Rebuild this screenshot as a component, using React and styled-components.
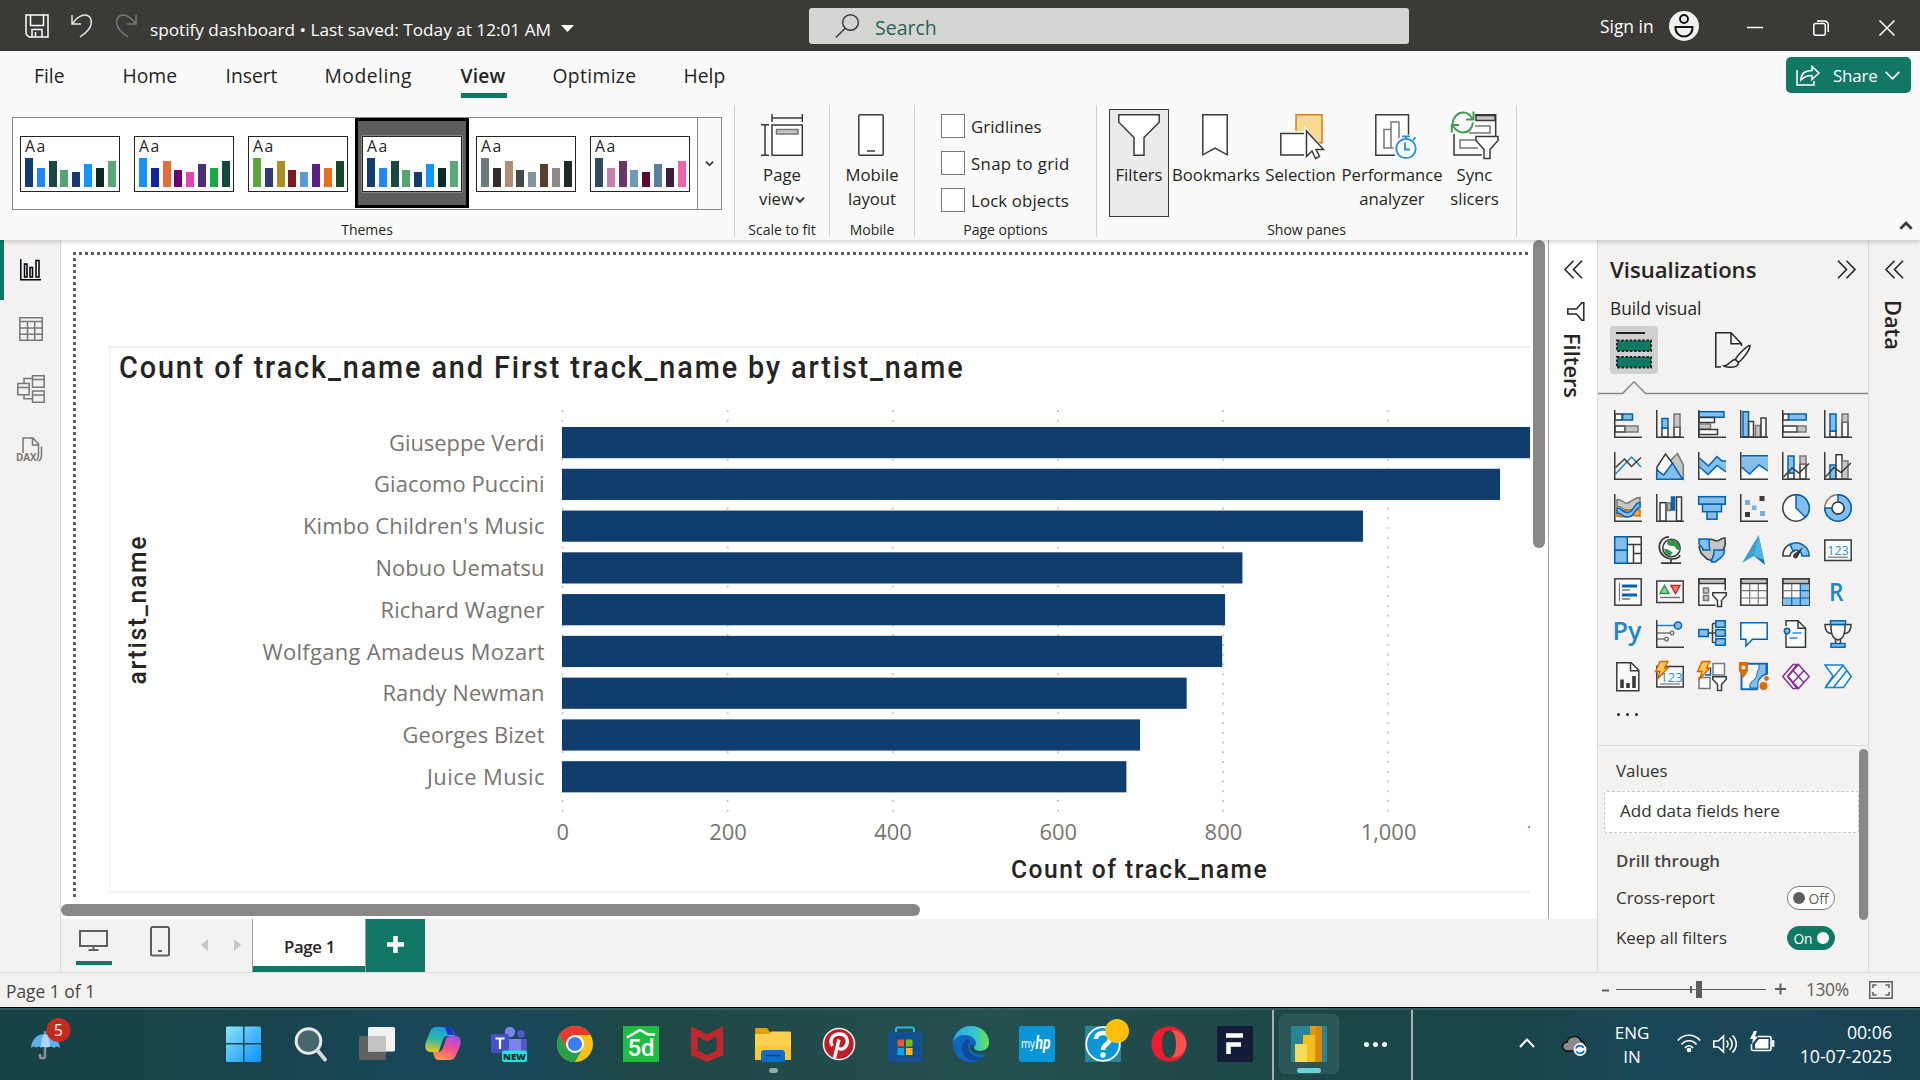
import React from "react";
import styled, { createGlobalStyle } from "styled-components";

const sans = `"Open Sans", "Noto Sans", "Liberation Sans", sans-serif`;
const din = `Roboto, "Open Sans", sans-serif`;
const green = "#117865";
const dark = "#3b3a39";
const blue = "#0063b1";
const lightBlue = "#83beec";
const gray = "#797775";
const lightGray = "#c8c6c4";
const offWhite = "#fafafa";

const Global = createGlobalStyle`
  * { box-sizing: border-box; }
  body { margin: 0; background: #f3f2f1; font-family: ${sans}; color: #252423; overflow: hidden; }
  svg { display: block; flex: none; overflow: visible; }
`;

const Window = styled.div`
  display: flex;
  flex-direction: column;
  width: 1920px;
  height: 1080px;
  overflow: hidden;
`;

/* ---------- title bar ---------- */
const TitleBar = styled.header`
  display: flex;
  align-items: center;
  height: 51px;
  background: #3b3a37;
  color: #fff;
  flex: none;
`;
const QuickAccess = styled.div`
  display: flex;
  align-items: center;
  gap: 22px;
  padding-left: 25px;
  width: 150px;
`;
const DocTitle = styled.div`
  display: flex;
  align-items: center;
  gap: 10px;
  width: 659px;
  font-size: 17.2px;
  white-space: nowrap;
  padding-top: 7px;
`;
const SearchBox = styled.div`
  display: flex;
  align-items: center;
  gap: 16px;
  width: 600px;
  height: 36px;
  margin-bottom: -1px;
  padding-left: 26px;
  border-radius: 3px;
  background: #d4d4d2;
  color: #2a6358;
  font-size: 19.5px;
  span { padding-top: 2px; }
`;
const SignIn = styled.div`
  display: flex;
  align-items: center;
  gap: 15px;
  width: 338px;
  padding-left: 191px;
  font-size: 17.4px;
  white-space: nowrap;
`;
const WindowButtons = styled.div`
  display: flex;
  align-items: center;
  gap: 50px;
  padding-top: 4px;
`;

/* ---------- ribbon ---------- */
const Ribbon = styled.div`
  height: 189px;
  flex: none;
  background: #fafafa;
  box-shadow: 0 2px 5px rgba(0, 0, 0, 0.18);
  z-index: 2;
`;
const TabRow = styled.nav`
  display: flex;
  height: 54px;
  padding-left: 34px;
`;
const Tab = styled.div`
  width: ${(p) => p.$w}px;
  height: 47px;
  margin-right: ${(p) => p.$gap || 48}px;
  padding-top: 11px;
  font-size: 19.3px;
  line-height: 28px;
  white-space: nowrap;
  font-weight: ${(p) => (p.$active ? 600 : 400)};
  border-bottom: 5px solid ${(p) => (p.$active ? green : "transparent")};
  letter-spacing: ${(p) => p.$ls || 0}px;
`;
const ShareButton = styled.div`
  display: flex;
  align-items: center;
  width: 125px;
  height: 36px;
  margin: 6px 9px 0 auto;
  padding-left: 10px;
  border-radius: 5px;
  background: ${green};
  color: #fff;
  font-size: 17px;
  span { width: 57px; padding-left: 13px; margin-right: 8px; letter-spacing: -0.2px; }
`;
const GroupRow = styled.div`
  display: flex;
  height: 132px;
`;
const Group = styled.section`
  display: flex;
  flex-direction: column;
  justify-content: space-between;
  width: ${(p) => p.$w}px;
  border-right: 1px solid #d2d0ce;
`;
const GroupBody = styled.div`
  display: flex;
  height: 112px;
  padding-top: 4px;
  padding-left: ${(p) => p.$pl || 0}px;
  justify-content: ${(p) => (p.$center ? "center" : "flex-start")};
`;
const GroupLabel = styled.div`
  height: 17px;
  font-size: 14px;
  line-height: 19px;
  text-align: center;
  white-space: nowrap;
`;
const Gallery = styled.div`
  display: flex;
  width: 710px;
  height: 93px;
  margin: 8px 0 0 12px;
  border: 1px solid #8a8886;
  background: #fff;
`;
const ThemeCell = styled.div`
  display: flex;
  align-items: center;
  justify-content: center;
  width: 114px;
  height: ${(p) => (p.$active ? 90 : 91)}px;
  padding-top: ${(p) => (p.$active ? 1 : 0)}px;
  border: ${(p) => (p.$active ? "3px solid #000" : "0")};
  background: ${(p) => (p.$active ? "#5c5c5c" : "#fff")};
`;
const ThemeThumb = styled.div`
  display: flex;
  flex-direction: column;
  justify-content: space-between;
  width: 100px;
  height: 56px;
  padding: 2px 3px 4px 4px;
  border: 1px solid #252423;
  background: #fff;
  outline: ${(p) => (p.$active ? "1px solid #888" : "0")};
  flex: none;
`;
const ThumbText = styled.div`
  height: 18px;
  font-size: 15.8px;
  line-height: 15px;
  letter-spacing: 1.5px;
`;
const ThumbBars = styled.div`
  display: flex;
  align-items: flex-end;
  gap: 3.8px;
  height: 29px;
`;
const ThumbBar = styled.i`
  width: 8px;
  height: ${(p) => p.$h}px;
  background: ${(p) => p.$c};
`;
const GalleryMore = styled.div`
  display: flex;
  align-items: center;
  justify-content: center;
  width: 24px;
  border-left: 1px solid #8a8886;
  background: #fafafa;
`;
const Command = styled.div`
  display: flex;
  flex-direction: column;
  align-items: center;
  width: ${(p) => p.$w}px;
  height: 108px;
  border: 1px solid ${(p) => (p.$active ? "#3b3a39" : "transparent")};
  background: ${(p) => (p.$active ? "#ebebeb" : "transparent")};
`;
const CommandIcon = styled.div`
  display: flex;
  justify-content: center;
  height: 53px;
  padding-top: 4px;
  padding-left: ${(p) => p.$pl || 0}px;
  padding-right: ${(p) => p.$pr || 0}px;
`;
const CommandText = styled.div`
  font-size: 16.7px;
  line-height: 24px;
  text-align: center;
  white-space: pre;
  svg { display: inline-block; margin-left: 1px; vertical-align: 2px; }
`;
const CheckList = styled.div`
  display: flex;
  flex-direction: column;
  gap: 13px;
  padding: 5px 0 0 26px;
`;
const CheckRow = styled.label`
  display: flex;
  align-items: center;
  gap: 6px;
  height: 24px;
  font-size: 16.8px;
  letter-spacing: ${(p) => p.$ls}px;
  white-space: nowrap;
`;
const CheckBox = styled.i`
  width: 24px;
  height: 24px;
  border: 1px solid #797775;
  background: #fff;
`;
const Collapse = styled.div`
  display: flex;
  align-items: flex-end;
  margin-left: auto;
  padding: 0 7px 7px 0;
`;

/* ---------- work area ---------- */
const Work = styled.main`
  display: flex;
  height: 732px;
  flex: none;
`;
const Nav = styled.aside`
  width: 61px;
  border-right: 1px solid #dcdbd9;
  background: #f3f2f1;
`;
const NavItem = styled.div`
  display: flex;
  align-items: center;
  justify-content: center;
  height: ${(p) => p.$h || 60}px;
  padding-left: ${(p) => (p.$active ? 0 : 2)}px;
  padding-right: ${(p) => (p.$active ? 3 : 0)}px;
  border-left: ${(p) => (p.$active ? `4px solid ${green}` : "0")};
`;
const CenterColumn = styled.div`
  width: 1536px;
  display: flex;
  flex-direction: column;
`;
const CanvasRow = styled.div`
  display: flex;
  height: 679px;
  background: #fff;
`;
const CanvasArea = styled.div`
  display: grid;
  grid-template-columns: 1472px 12px 3px;
  grid-template-rows: 664px 12px 3px;
  width: 1487px;
`;
const Page = styled.div`
  width: 1457px;
  height: 646px;
  margin: 12px 0 0 12px;
  padding: 94px 0 0 36px;
  overflow: hidden;
  background:
    repeating-linear-gradient(90deg, #605e5c 0 3px, #fff 3px 6px) 0 0 / 100% 3px no-repeat,
    repeating-linear-gradient(180deg, #605e5c 0 3px, #fff 3px 6px) 0 0 / 3px 100% no-repeat,
    #fff;
`;
const Visual = styled.section`
  width: 1800px;
  height: 547px;
  border: solid #f1f1f1;
  border-width: 2px 1px;
`;
const VisualTitle = styled.h2`
  height: 52px;
  margin: 0;
  padding: 1px 0 0 9px;
  font: 500 31px/38px ${din};
  letter-spacing: 2.02px;
  white-space: nowrap;
  span { display: inline-block; transform: scaleX(0.93); transform-origin: 0 50%; }
`;
const ScrollThumb = styled.div`
  width: ${(p) => p.$w}px;
  height: ${(p) => p.$h}px;
  border-radius: 6px;
  background: #8a8886;
`;
const FiltersPane = styled.aside`
  display: flex;
  flex-direction: column;
  align-items: center;
  width: 49px;
  padding-top: 20px;
  border-left: 1px solid #a6a5a3;
  background: #fff;
`;
const FilterGlyph = styled.div`
  padding: 23px 0 0 6px;
`;
const VerticalLabel = styled.div`
  writing-mode: vertical-rl;
  font-size: ${(p) => p.$size}px;
  font-weight: 600;
  line-height: 28px;
  margin-top: ${(p) => p.$mt}px;
  margin-right: ${(p) => p.$mr || 0}px;
`;
const PageBar = styled.div`
  display: flex;
  height: 53px;
  background: #f3f2f1;
`;
const ViewModes = styled.div`
  display: flex;
  width: 191px;
  padding: 7px 0 0 15px;
`;
const ViewMode = styled.div`
  display: flex;
  flex-direction: column;
  align-items: center;
  width: 36px;
  height: 39px;
  margin-right: ${(p) => p.$gap || 0}px;
  padding-top: ${(p) => p.$pt || 0}px;
  padding-right: 2px;
  border-bottom: 4px solid ${(p) => (p.$active ? green : "transparent")};
`;
const PageArrows = styled.div`
  display: flex;
  gap: 26px;
  padding: 13px 0 0 22px;
`;
const PageTab = styled.div`
  width: 114px;
  padding: 12px 0 0 1px;
  border: solid #a19f9d;
  border-width: 0 1px;
  background: linear-gradient(${green}, ${green}) 0 100% / 100% 6px no-repeat, #fff;
  font-size: 16.8px;
  font-weight: 600;
  line-height: 32px;
  text-align: center;
  letter-spacing: -0.3px;
`;
const AddPage = styled.div`
  display: flex;
  align-items: center;
  justify-content: center;
  width: 59px;
  padding-bottom: 3px;
  background: ${green};
`;

/* ---------- visualizations pane ---------- */
const VizPane = styled.aside`
  width: 272px;
  border: solid #dcdbd9;
  border-width: 0 1px;
  background: #f3f2f1;
`;
const PaneHeader = styled.div`
  display: flex;
  align-items: center;
  justify-content: space-between;
  height: 58px;
  padding: 0 12px 0 12px;
  font-size: 22.1px;
  font-weight: 600;
`;
const BuildLabel = styled.div`
  height: 20px;
  padding: 1px 0 0 12px;
  font-size: 17.3px;
  line-height: 20px;
  font-weight: 500;
`;
const ModeRow = styled.div`
  display: flex;
  gap: 51px;
  height: 48px;
  margin-top: 8px;
  padding-left: 12px;
`;
const ModeButton = styled.div`
  display: flex;
  align-items: center;
  justify-content: center;
  width: 48px;
  height: 48px;
  border-radius: 4px;
  background: ${(p) => (p.$active ? "#d2d0ce" : "transparent")};
`;
const DividerWrap = styled.div`
  height: 36px;
  padding-top: 7px;
`;
const VizGrid = styled.div`
  display: grid;
  grid-template-columns: repeat(6, 28px);
  gap: 14px;
  padding-left: 16px;
`;
const More = styled.div`
  display: flex;
  gap: 6px;
  height: 55px;
  padding: 23px 0 0 19px;
  i { width: 3px; height: 3px; border-radius: 2px; background: #252423; }
`;
const FieldsArea = styled.div`
  display: flex;
  justify-content: space-between;
  height: 226px;
  padding-top: 3px;
  border-top: 1px solid #dcdbd9;
`;
const Fields = styled.div`
  width: 261px;
  padding-left: 6px;
`;
const FieldLabel = styled.div`
  height: ${(p) => p.$h}px;
  padding: ${(p) => p.$pt}px 0 0 12px;
  font-size: 16.9px;
  line-height: 24px;
  font-weight: ${(p) => (p.$bold ? 600 : 400)};
  color: ${(p) => (p.$bold ? "#484644" : "#323130")};
`;
const DropWell = styled.div`
  width: 255px;
  height: 42px;
  padding-left: 15px;
  border: 1px dashed #c8c6c4;
  border-radius: 3px;
  background: #fff;
  color: #323130;
  font-size: 17.1px;
  line-height: 38px;
`;
const ToggleRow = styled.div`
  display: flex;
  align-items: center;
  justify-content: space-between;
  height: 40px;
  padding: 0 24px 0 12px;
  font-size: 16.9px;
  color: #323130;
  span { padding-bottom: 2px; }
`;
const Toggle = styled.div`
  display: flex;
  align-items: center;
  justify-content: center;
  flex-direction: ${(p) => (p.$on ? "row-reverse" : "row")};
  gap: ${(p) => (p.$on ? 4 : 3)}px;
  width: 48px;
  height: 24px;
  border: 1px solid ${(p) => (p.$on ? green : gray)};
  border-radius: 12px;
  background: ${(p) => (p.$on ? green : "#fff")};
  color: ${(p) => (p.$on ? "#fff" : "#605e5c")};
  font-size: 13.8px;
  i { width: 12px; height: 12px; border-radius: 6px; background: ${(p) => (p.$on ? "#fff" : "#605e5c")}; }
`;
const DataPane = styled.aside`
  display: flex;
  flex-direction: column;
  align-items: center;
  width: 51px;
  padding-top: 20px;
  background: #f3f2f1;
`;

/* ---------- status bar ---------- */
const StatusBar = styled.footer`
  display: flex;
  align-items: center;
  justify-content: space-between;
  height: 36px;
  padding: 0 27px 0 6px;
  border-top: 1px solid #dcdbd9;
  border-bottom: 1px solid #000;
  background: #f3f2f1;
  color: #484644;
  font-size: 17.4px;
  flex: none;
`;
const PageCount = styled.span`
  padding-top: 1px;
`;
const Zoom = styled.div`
  display: flex;
  align-items: center;
  color: #605e5c;
  span { width: 62px; margin-left: -1px; margin-right: 1px; padding-bottom: 2px; letter-spacing: -0.4px; }
`;

/* ---------- taskbar ---------- */
const Taskbar = styled.div`
  display: flex;
  height: 72px;
  flex: none;
  border-top: 2px solid #335c60;
  background: linear-gradient(90deg, #174346 0, #17434a 12%, #194757 21%, #1a4858 28%, #1d4845 33%, #214a49 40%, #24504f 52%, #204a4a 62%, #1a4746 70%, #184549 79%, #1a4757 86%, #194556 94%, #174250 100%);
  color: #fff;
`;
const Weather = styled.div`
  width: 225px;
  padding: 6px 0 0 30px;
`;
const AppSlot = styled.div`
  display: flex;
  flex-direction: column;
  width: ${(p) => (p.$first ? 67 : 66)}px;
  padding: 16px 0 0 1px;
`;
const Dot = styled.i`
  width: 9px;
  height: 5px;
  margin: 6px 0 0 14px;
  border-radius: 3px;
  background: #93a8a8;
`;
const Divider = styled.i`
  width: 2px;
  height: 70px;
  margin-left: ${(p) => p.$ml}px;
  background: #a3b3b3;
`;
const ActiveApp = styled.div`
  display: flex;
  flex-direction: column;
  align-items: center;
  width: 60px;
  height: 60px;
  margin: 4px 0 0 5px;
  padding-top: 11px;
  border: 1px solid #355d5d;
  border-radius: 6px;
  background: #2b5655;
  i { width: 24px; height: 5px; margin-top: 6px; border-radius: 3px; background: #6fd0dc; }
`;
const TrayDots = styled.div`
  display: flex;
  gap: 4px;
  padding: 32px 0 0 25px;
  i { width: 5px; height: 5px; border-radius: 3px; background: #fff; }
`;
const Tray = styled.div`
  display: flex;
  flex: 1;
  padding-left: 106px;
`;
const TrayItem = styled.div`
  width: ${(p) => p.$w}px;
  padding-top: ${(p) => p.$pt}px;
`;
const TrayText = styled.div`
  width: ${(p) => p.$w}px;
  margin-right: ${(p) => p.$mr || 0}px;
  padding-top: 11px;
  font-size: ${(p) => p.$size}px;
  line-height: 23.5px;
  text-align: ${(p) => p.$align};
  white-space: nowrap;
`;

/* ---------- drawing helpers ---------- */
const Icon = ({ w, h, vb, children, stroke = dark, sw = 1.5 }) => (
  <svg width={w} height={h} viewBox={vb || `0 0 ${w} ${h}`} fill="none" stroke={stroke} strokeWidth={sw}>
    {children}
  </svg>
);
const Chevrons = ({ flip }) => (
  <Icon w={19} h={19} stroke="#252423" sw={1.6}>
    <path d={flip ? "M1 .8l8.5 8.7L1 18.2M9.5.8l8.5 8.7-8.5 8.7" : "M9.5.8L1 9.5l8.5 8.7M18 .8L9.500 9.500l8.500 8.700"} />
  </Icon>
);
const SmallCaret = ({ up, w = 9 }) => (
  <Icon w={w} h={w * 0.62} vb="0 0 10 6.2" sw={2}>
    <path d={up ? "M1 5.5l4-4 4 4" : "M1 .8l4 4 4-4"} />
  </Icon>
);

/* ---------- theme gallery ---------- */
const barHeights = [29, 18.5, 25.5, 17, 14.5, 22.5, 18.5, 25.5];
const themes = [
  ["#143c6e", "#2188ff", "#1c4640", "#57a472", "#143c6e", "#1296ff", "#0b2a26", "#5aa878"],
  ["#1890ff", "#12239e", "#e66c37", "#6b007b", "#e645ab", "#4b2e78", "#1aab40", "#15463f"],
  ["#5ba53c", "#2d3a74", "#ab8f22", "#7a1a22", "#5b9bd5", "#5c1f85", "#e8701c", "#18472a"],
  ["#143c6e", "#2188ff", "#1c4640", "#57a472", "#143c6e", "#1296ff", "#0b2a26", "#5aa878"],
  ["#6b7a7c", "#342a28", "#b08d74", "#404a4a", "#83959a", "#5e3a30", "#8d8b85", "#1f2928"],
  ["#34495e", "#c77fae", "#6b3569", "#6d9abb", "#5f0631", "#5b809c", "#3c1d3c", "#ee62a6"],
];

/* ---------- bar chart ---------- */
const artists = [
  ["Giuseppe Verdi", 1240, 155.5],
  ["Giacomo Puccini", 1136, 170.5],
  ["Kimbo Children's Music", 970, 241.5],
  ["Nobuo Uematsu", 824, 169],
  ["Richard Wagner", 803, 164],
  ["Wolfgang Amadeus Mozart", 799.5, 282],
  ["Randy Newman", 756.5, 162],
  ["Georges Bizet", 700, 142],
  ["Juice Music", 683.5, 117.5],
];
const PlotLabel = styled.text`
  font: 400 21.9px ${sans};
  fill: #777472;
`;
const AxisTitle = styled.text`
  font: 500 26.5px ${din};
  fill: #252423;
`;
const x0 = 562.5;
const step = 165.15;
const Chart = () => (
  <svg width="1690" height="491" viewBox="110 400 1690 491">
    {[0, 1, 2, 3, 4, 5].map((i) => (
      <line key={i} x1={x0 + i * step} x2={x0 + i * step} y1="410" y2="812" stroke="#c8c6c4" strokeWidth="1.8" strokeDasharray="2 7.75" />
    ))}
    {artists.map(([name, v, len], i) => (
      <g key={name}>
        <rect x="562" y={427 + i * 41.77} width={(v / 200) * step} height="31.2" fill="#113d6e" />
        <PlotLabel x={544.5 - len} y={450.7 + i * 41.77} textLength={len}>{name}</PlotLabel>
      </g>
    ))}
    {["0", "200", "400", "600", "800", "1,000", "1,200"].map((t, i) => (
      <PlotLabel key={t} x={x0 + 0.3 + i * step} y="840" textAnchor="middle">{t}</PlotLabel>
    ))}
    <AxisTitle textLength="275" transform="translate(1011 877.5) scale(.93 1)">Count of track_name</AxisTitle>
    <AxisTitle textLength="159" transform="translate(145.500 684.500) rotate(-90) scale(.93 1)">artist_name</AxisTitle>
  </svg>
);

/* ---------- visual type icons ---------- */
const B = (p) => <rect fill={lightBlue} stroke={blue} {...p} />;
const G = (p) => <rect fill={lightGray} stroke={gray} {...p} />;
const W = (p) => <rect fill={offWhite} stroke={dark} {...p} />;
const Axis = () => <path d="M.75 0v27.25H28" />;
const Bolt = () => <path d="M4-.5h8L8.5 6H12L1.5 17 4 9.500H-.5z" fill="#f9c74f" stroke="#d06000" strokeWidth="1.3" />;
const Funnel = ({ x = 14, y = 14 }) => (
  <path transform={`translate(${x} ${y})`} d="M.7.7h13.600v2.600L9.500 8.500v6h-4v-6L.7 3.300z" fill={offWhite} />
);
const vizIcons = [
  <><W x="1" y="4" width="7" height="6" /><B x="8.700" y="4" width="9.800" height="6" /><W x="1" y="16" width="10" height="6" /><G x="11.500" y="16" width="12.500" height="6" /><Axis /></>,
  <><W x="6" y="18" width="6" height="9" /><B x="6" y="8.500" width="6" height="9.500" /><W x="18" y="17" width="6" height="10" /><G x="18" y="4" width="6" height="13" /><Axis /></>,
  <><B x="1" y="1.700" width="25" height="5.500" /><W x="1" y="7.500" width="15.500" height="5" /><G x="1" y="14" width="11.500" height="5" /><W x="1" y="19.500" width="18.500" height="5" /><Axis /></>,
  <><B x="3" y="1.700" width="5.500" height="25" /><W x="8.700" y="11.500" width="4.800" height="15.500" /><G x="15.500" y="15.500" width="4.800" height="11.500" /><W x="21" y="8" width="5" height="19" /><Axis /></>,
  <><W x="1" y="4" width="5.500" height="6" /><B x="6.700" y="4" width="17.500" height="6" /><W x="1" y="16" width="14" height="6" /><G x="15.500" y="16" width="8.500" height="6" /><Axis /></>,
  <><W x="6" y="21" width="6" height="6" /><B x="6" y="4" width="6" height="17" /><W x="18" y="12" width="6" height="15" /><G x="18" y="4" width="6" height="8" /><Axis /></>,
  <><path d="M1.500 22L10 13l7.500-8L27 15" stroke="#2287c7" /><path d="M1.500 15.500l9-8.500 7 7.500L27 5.500" /><Axis /></>,
  <><path d="M13 10L21.500 1.500 27.300 13v14L14 14z" fill={lightGray} stroke={gray} /><path d="M1 18V15L9.500 2l7.500 10-9 12z" fill={offWhite} /><path d="M.7 18l7 5L16.500 11l10 16.200H.7z" fill={lightBlue} stroke={blue} /></>,
  <><path d="M1 15l9 7.500 9-9 8.500 7V27H1z" fill={offWhite} stroke="none" /><path d="M1.500 6l9 8 8.500-9.500 5 4.500h4v11L19 13.500l-9 9L1.500 15z" fill={lightBlue} stroke="none" /><path d="M1.500 6l9 8 8.500-9.500 5 4.500h4M28 20l-9-6.500-9 9L1.500 15" stroke={blue} /><Axis /></>,
  <><path d="M1.500 3.700H28V19l-9-6-9.500 9-8-7z" fill={lightBlue} stroke="none" /><path d="M1.500 15l8 7 9.500-9 9 7v7H1.500z" fill={offWhite} stroke="none" /><path d="M1.500 3.700H28M28 19l-9-6-9.500 9-8-7" stroke={blue} /><Axis /></>,
  <><W x="6" y="21" width="6" height="6" /><B x="6" y="4" width="6" height="17" /><W x="18" y="12" width="6" height="15" /><G x="18" y="4" width="6" height="8" /><path d="M1.500 25L10 16l7 5 10-9.500" /><Axis /></>,
  <><B x="6" y="13" width="6" height="14" /><W x="12" y="2.700" width="6" height="24.500" /><G x="18" y="9" width="6" height="18" /><path d="M1.500 25L10 15.500l7 5 10-9.500" /><Axis /></>,
  <><path d="M3 5.500c8 0 6 6 12 3s6-5 11-5v9c-5 0-5 4-11 4s-6-4-12-4z" fill={lightGray} stroke={gray} /><path d="M3 16c5 1 6 1 12 0s6-1 11 0v6c-6-1-8-1-11 0s-6 1-12 0z" fill="#f7a83c" stroke="#e06c00" /><path d="M3 14c6 0 5 5 11 4.500S20 8.500 26 8.500v5c-5 0-5 9-12 9.500S9 19 3 19z" fill={lightBlue} stroke={blue} /><Axis /></>,
  <><W x="4" y="8.700" width="6" height="18.500" /><G x="11.500" y="9" width="3" height="7.500" /><rect x="15.500" y="3" width="3" height="13" fill="#1068b5" stroke={blue} /><W x="20.500" y="3" width="5" height="24" /><Axis /></>,
  <><B x=".7" y="2.700" width="26.600" height="7.500" /><B x="4.500" y="10.200" width="19" height="7.500" /><B x="9" y="17.700" width="10" height="7.500" /></>,
  <><g stroke="none"><path d="M19.500 2h5v5h-5zM5 18h5v5H5z" fill={dark} /><path d="M5 6h5v5H5zM12 11.500h4.500V16H12zM20 17h5v5h-5z" fill="#6cb1e8" /></g><Axis /></>,
  <><circle cx="14" cy="14" r="13.200" fill={offWhite} /><path d="M14 .8A13.200 13.200 0 0 1 23.300 23.300L14 14z" fill={lightBlue} stroke={blue} /></>,
  <><circle cx="14" cy="14" r="13.200" fill={offWhite} stroke={gray} /><path d="M14 .8A13.200 13.200 0 1 1 .8 14H8a6 6 0 1 0 6-6z" fill={lightBlue} stroke={blue} /><circle cx="14" cy="14" r="6" fill={offWhite} /></>,
  <><rect x=".8" y=".8" width="26.400" height="26.400" fill={offWhite} /><B x=".8" y=".8" width="12.500" height="13.500" /><B x=".8" y="14.300" width="12.500" height="12.900" /><path d="M13.300 8.500H27M19.500 8.500V27M19.500 17.500H27" /></>,
  <><circle cx="15.500" cy="12" r="8.700" fill="#fff" /><path d="M15.500 3.500c4 0 3 3 6 2.500 2 3 3 6 1 8-3 0-3-4-5-4s-5 0-6-2 1-4 4-4.500zM8 13c3-1 6 2 8 3s-2 4-3 4-4-3-5-7z" fill="#2f9648" stroke="none" /><path d="M13 .8C6 1 2.500 7 3.500 13s7 10 12 10 8-2 8.500-4M15 23v4M5 27.200h20" strokeWidth="1.700" /></>,
  <><path d="M11.500 3.500c4-1 6 3 9 1s4-3 6.500-2.500c1 6-1 12-4 15s-6 3-8 8l-6-2-6-6-2-6z" fill={lightGray} stroke={dark} /><path d="M1 3h9.500c2 2-.5 7 1.500 11H5c0-3-3-4-4-6z" fill={lightBlue} stroke={blue} /><path d="M16 14h10.500c0 7-5 8-9 12h-4c-1-3 3-4 2.500-12z" fill={lightBlue} stroke={blue} /></>,
  <g stroke="none"><path d="M18.500-1L2 27l12-7z" fill="#3c9fd0" /><path d="M18.500-1L25 29 14 20z" fill="#1272c4" /><path d="M18.500-1L14 20l10 4z" fill="#4fb4e0" /></g>,
  <><path d="M.8 20A13.200 13.200 0 0 1 8 8.200L12 15a6 6 0 0 0-4 5z" fill={offWhite} /><path d="M8 8.500A13 13 0 0 1 27.200 20H20a6 6 0 0 0-9-5z" fill={lightBlue} stroke={blue} /><path d="M21 11l-5 9.500a2.500 2.500 0 1 1-4-2.500z" fill={dark} stroke="none" /></>,
  <><rect x=".8" y="4" width="26.400" height="20.500" fill={offWhite} /><path d="M4 21.200h20" stroke={gray} strokeWidth="1.200" /><text x="14" y="18.500" fontSize="12.500" fill="#2b8fd0" stroke="none" textAnchor="middle" fontFamily="Open Sans">123</text></>,
  <><rect x=".8" y=".8" width="26.400" height="26.400" fill={offWhite} /><path d="M5.500 4.500v19" stroke={gray} strokeWidth="1.200" /><path d="M8 8h15M8 17h15" stroke={blue} strokeWidth="3" /><path d="M8 12h8M8 21h8" stroke={gray} /></>,
  <><rect x=".8" y="3" width="26.400" height="21.500" fill={offWhite} /><path d="M4 15.500l4.500-8 4.500 8z" fill="#8fd09a" stroke="#2f9648" /><path d="M15 7.500h9l-4.500 8z" fill="#f08080" stroke="#c62828" /><path d="M4 19.500h20" stroke={gray} /></>,
  <><rect x=".8" y=".8" width="26.400" height="26.400" fill={offWhite} /><path d="M1 1h26v4.500H1z" fill={lightGray} /><G x="5.500" y="10" width="5" height="5" /><G x="5.500" y="17.500" width="5" height="5" /><path d="M13.500 12.500h16v18h-11z" fill="#f3f2f1" stroke="none" /><Funnel x={14} y={14} /></>,
  <><rect x=".8" y=".8" width="26.400" height="26.400" fill={offWhite} /><path d="M1 1h26v4.500H1z" fill={lightGray} /><path d="M9.700 6v21M18.300 6v21M1 12.700h26M1 20h26" stroke={gray} strokeWidth="1.200" /></>,
  <><rect x=".8" y=".8" width="26.400" height="26.400" fill={offWhite} /><path d="M18.300 6H27v21H1v-7h17.300z" fill={lightBlue} stroke="none" /><path d="M1 1h26v4.500H1z" fill={lightGray} /><path d="M9.700 6v14M1 12.700h17" stroke={gray} strokeWidth="1.200" /><path d="M18.300 6v21M9.700 20v7M1 20h26M18 12.700h9" stroke={blue} strokeWidth="1.200" /></>,
  <text x="5" y="23" fontSize="25" fontWeight="600" fill="#2287c7" stroke="none" fontFamily="Open Sans" textLength="14.500" lengthAdjust="spacingAndGlyphs">R</text>,
  <text x="-1.500" y="20" fontSize="25" fontWeight="600" fill="#2287c7" stroke="none" fontFamily="Open Sans" textLength="29" lengthAdjust="spacingAndGlyphs">Py</text>,
  <><path d="M1 5.500h17" stroke="#2287c7" /><circle cx="22" cy="5.500" r="3.600" fill={lightBlue} stroke={blue} /><path d="M1 13h13M1 19h8" stroke={gray} /><circle cx="16" cy="13" r="1.800" stroke={gray} /><circle cx="10.500" cy="19" r="1.800" stroke={gray} /><Axis /></>,
  <><path d="M10 13h8M14.500 3.500v19M14.500 3.500H18M14.500 22.500H18" /><B x=".8" y="9.500" width="9.500" height="7" /><B x="17.700" y=".8" width="9.500" height="6.500" /><B x="17.700" y="9.700" width="9.500" height="6.500" /><B x="17.700" y="18.700" width="9.500" height="6.500" /></>,
  <path d="M.8 2.700h26.400v16.500H12.500L6 26v-6.800H.8z" fill={offWhite} stroke={blue} />,
  <><path d="M4 6V.8h12l7.500 7.500v18.900H4V14" fill={offWhite} /><path d="M16 .8v7.500h7.500" /><circle cx="5" cy="11" r="2.700" fill={lightBlue} stroke={blue} /><path d="M10.500 13h9M7.500 18h8" stroke="#2b8fd0" /></>,
  <><path d="M7 4.500c0 9 1 14 7 15.500 6-1.500 7-6.500 7-15.500z" fill={offWhite} /><path d="M7 4.500H1c0 6 2 9 7 9M21 4.500h6c0 6-2 9-7 9M11.500 19v4.500M16.500 19v4.500" /><B x="6.500" y=".8" width="15" height="3.700" /><B x="7" y="23.500" width="14" height="3.700" /></>,
  <><path d="M2.800.8h14.500l7.500 7.500v20.500h-22z" fill={offWhite} /><path d="M16.500.8v8h8" /><path d="M8 26v-8.500M14 26v-5M20 26V14" strokeWidth="3.600" /></>,
  <><rect x=".8" y="4.500" width="26.400" height="20.500" fill={offWhite} /><path d="M4 22h20" stroke={gray} strokeWidth="1.200" /><text x="15.500" y="19.500" fontSize="13" fill="#2b8fd0" stroke="none" textAnchor="middle" fontFamily="Open Sans">123</text><Bolt /></>,
  <><G x="15" y="1.500" width="11.500" height="11.500" fill={offWhite} /><G x="1" y="15.500" width="11" height="11" fill={offWhite} /><path d="M7 13h5.500V6" stroke={blue} /><path d="M13.500 14.500h16v15h-11z" fill="#f3f2f1" stroke="none" /><Bolt /><Funnel x={14} y={14} /></>,
  <><path d="M1.500 1.700h25.500v10c-5 1-8 4-10 9s2 4 0 6.500H1.500z" fill={offWhite} stroke="#1068b5" strokeWidth="2" /><path d="M19 2h7v10c-6 2-9 5-8 14h-8c-1-6 2-6 5-9s1-8 4-10z" fill={lightBlue} stroke="#1068b5" strokeWidth="1" /><path d="M-1 0h9v9l-4.500 7L-1 9z" fill="#e06c00" stroke="none" /><circle cx="3.500" cy="5.500" r="2" fill="#fff" stroke="none" /><g fill="#e06c00" stroke="none"><circle cx="23.500" cy="24" r="4" /><circle cx="26.500" cy="16.500" r="2.400" /></g></>,
  <g stroke="#8a2d9c" fill={offWhite}><path d="M15 2.500h-4L.8 14.500l10.200 12h4L5.800 14.500z" /><path d="M16.500 2.500l10.700 12-10.700 12-10.700-12z" /><path d="M11 8.500l11 12M22 8.500l-11 12" fill="none" /><path d="M11 8.500L5.800 14.500l5.200 6" fill="none" /></g>,
  <g stroke="#1080d8" fill={offWhite}><path d="M1 3h18l8.200 11.500L19.500 25.500H1.500L9 14z" /><path d="M1.500 25L19 3.500M9.500 25.500l13.500-17" fill="none" /></g>,
];

/* ---------- taskbar app icons ---------- */
const A = ({ children }) => <svg width="36" height="36" viewBox="0 0 36 36">{children}</svg>;
const apps = [
  <A><defs><linearGradient id="win" x2="1" y2="1"><stop stopColor="#8be4ff" /><stop offset="1" stopColor="#0a90fa" /></linearGradient></defs><path fill="url(#win)" d="M1 .5h16v16.500H0V1.500zM18.500.5H34l1 1V17H18.500zM0 18.500h17V36H1l-1-1zM18.500 18.500H35V35l-1 1H18.500z" /></A>,
  <A><circle cx="15.500" cy="15" r="12.300" fill="#47676f" stroke="#e8eaec" strokeWidth="3" /><path d="M24.500 24.500l7.500 9" stroke="#d7d9dc" strokeWidth="4" strokeLinecap="round" /></A>,
  <A><rect x="0" y="10" width="27" height="24" rx="1.500" fill="#616161" /><rect x="9" y="1" width="27" height="24.500" rx="1.500" fill="#f1f1f1" /><path d="M9 10h18v15.500H9z" fill="#c3c3c3" /></A>,
  <A><defs><linearGradient id="cpa" x1=".5" x2=".3" y2="1"><stop stopColor="#189de0" /><stop offset=".5" stopColor="#35b8a8" /><stop offset="1" stopColor="#e8cb1c" /></linearGradient><linearGradient id="cpb" x1=".8" x2=".3" y2="1"><stop stopColor="#a04df0" /><stop offset=".5" stopColor="#f0508f" /><stop offset="1" stopColor="#ff9a4a" /></linearGradient></defs><path d="M12 1h12c3 0 4 3 5 6l1 3h-7c-4 0-5 3-6 6l-3 9c-1 2-2 1-4 1H6c-5 0-7-4-5-10L5 6c1-3 3-5 7-5z" fill="url(#cpa)" /><path d="M18 1h6c3 0 4 3 5 8h-5c-3 0-2-8-6-8z" fill="#1836c8" /><path d="M24 34H13c-3 0-4-4-5-8h5c4 0 5-4 6-7l2-6c1-3 3-3 5-3h4c5 0 7 4 5 10l-4 9c-1 3-3 5-7 5z" fill="url(#cpb)" /></A>,
  <A><circle cx="19" cy="6" r="5.200" fill="#7b83eb" /><circle cx="30" cy="8" r="3.800" fill="#5059c9" /><path d="M14 13h22v14H14z" fill="#5059c9" /><path d="M16 13h14v16H16z" fill="#7b83eb" /><rect y="8" width="18" height="19" rx="2" fill="#4652c4" /><path d="M4.500 12.500h9M9 12.500V23" stroke="#fff" strokeWidth="2.200" /><rect x="11" y="24.500" width="25" height="11.500" rx="2" fill="#21e3dc" /><text x="23.500" y="33.700" textAnchor="middle" fontSize="9.500" fontWeight="800" fill="#082a2c" fontFamily="Open Sans">NEW</text></A>,
  <A><circle cx="18" cy="18" r="18" fill="#fbc116" /><path d="M2.400 9A18 18 0 0 1 33.600 9H18z" fill="#e33b2e" /><path d="M2.400 9A18 18 0 0 0 18 36l7.800-13.500H10.200z" fill="#28a04a" /><path d="M2.400 9L10.200 22.500 18 9z" fill="#e33b2e" /><circle cx="18" cy="18" r="9" fill="#fff" /><circle cx="18" cy="18" r="7" fill="#3c7df0" /></A>,
  <A><rect width="36" height="36" fill="#1fbc44" /><path d="M4 11.500L17 4l8 4.500h7" fill="none" stroke="#fff" strokeWidth="2.500" /><text x="18" y="30" textAnchor="middle" fontSize="24" fontWeight="500" fill="#fff" fontFamily="Roboto">5d</text></A>,
  <A><path d="M2 0l16 8.500L34 0v29L18 36 2 29z" fill="#c0282d" /><path d="M8.500 10.500L18 15.500l9.500-5v14L18 29l-9.500-4.500z" fill="#204a49" /></A>,
  <><A><path d="M0 3c0-1 1-1 1-1h11l3 4v6H0z" fill="#dfa000" /><path d="M0 8h14l2-2.500h19l1 1V34H0z" fill="#fdd14f" /><path d="M0 20h36v14H0z" fill="#fcc22f" opacity=".6" /><path d="M6 36V27c0-2 1.500-3 3-3h18c2 0 3 1.500 3 3v9z" fill="#0f6fc4" /><path d="M11 29.500h14" stroke="#093f78" strokeWidth="1.500" /></A><Dot /></>,
  <A><circle cx="18" cy="18" r="15.500" fill="#be1e28" stroke="#eee" strokeWidth="1.600" /><path d="M13.500 32L18 13.500M11.500 20C8 15 11 8 18.500 8S28 15.500 25 20s-8 3.500-8.700.5" fill="none" stroke="#fff" strokeWidth="3.300" /></A>,
  <A><path d="M9 8V3c0-1 1-1.500 2-1.500h14c1 0 2 .5 2 1.500v5" fill="none" stroke="#2ab5ee" strokeWidth="2" /><path d="M1 6h34v27c0 2-1 3-3 3H4c-2 0-3-1-3-3z" fill="#124f93" /><path d="M10.500 13.500H17v7h-6.500z" fill="#f35325" /><path d="M19 13.500h6.500v7H19z" fill="#81bc06" /><path d="M10.500 22H17v7h-6.500z" fill="#05a6f0" /><path d="M19 22h6.500v7H19z" fill="#ffba08" /></A>,
  <A><defs><linearGradient id="edg" x2="1"><stop stopColor="#2aa6e4" /><stop offset=".6" stopColor="#35c5d0" /><stop offset="1" stopColor="#6be04a" /></linearGradient></defs><circle cx="18" cy="18" r="18" fill="#1066bf" /><path d="M0 17C1 6 9 0 18 0c11 0 18 8 18 16 0 6-4 9-9 9-4 0-6-1-6-3s2-2 2-5c0-4-5-8-11-8S1 12 0 17z" fill="url(#edg)" /><path d="M15 13c-6 2-8 11-3 17s13 6 20 0c-6 3-17-1-17-9 0-4 2-5 2-6s-1-2-2-2z" fill="#0f4a94" /><path d="M21 19c-1 4 2 6 6 6 3 0 6-1 9-4v7h-4c-7 2-16-2-15-7 0-3 3-2 4-2z" fill="#224c4b" /></A>,
  <A><rect width="36" height="36" rx="2" fill="#0a96d6" /><text x="2" y="22" fontSize="12" fill="#fff" fontFamily="Open Sans" textLength="14" lengthAdjust="spacingAndGlyphs">my</text><text x="16.500" y="23" fontSize="18" fontWeight="700" fontStyle="italic" fill="#fff" fontFamily="Roboto" textLength="15" lengthAdjust="spacingAndGlyphs">hp</text></A>,
  <A><rect width="36" height="36" fill="#2b8494" /><circle cx="18" cy="18" r="16.800" fill="#0a96d6" stroke="#fff" strokeWidth="1.800" /><path d="M11 13c0-4 3-6 7-6s7 3 7 6c0 5-7 5-7 11" fill="none" stroke="#fff" strokeWidth="4.500" /><circle cx="18" cy="29" r="2.700" fill="#fff" /><circle cx="32" cy="5" r="12" fill="#fdbf0c" /></A>,
  <A><path d="M18 .5C7.500.5.500 8 .5 18S7.500 35.500 18 35.500 35.500 28 35.500 18 28 .5 18 .5zm0 4c5 0 7 6 7 13.500S23 31.500 18 31.500 11 25.500 11 18 13 4.500 18 4.500z" fill="#ee1c2e" fillRule="evenodd" /><path d="M20 4.500c8-1 15.500 5 15.500 13.500S28 32.500 20 31.500c4-2 5-7 5-13.500S24 6.500 20 4.500z" fill="#ff5050" /></A>,
  <A><rect width="36" height="36" fill="#141c38" /><path d="M9 9.500h17M11.500 28V18.500H24" fill="none" stroke="#fff" strokeWidth="4.500" /></A>,
];

const tabs = [["File", 31, 57.5], ["Home", 55], ["Insert", 51], ["Modeling", 88, 48, 0.5], ["View", 46, 46, 0.2], ["Optimize", 84, 47, 0.35], ["Help", 42]];

export default function App() {
  return (
    <Window>
      <Global />
      <TitleBar>
        <QuickAccess>
          <Icon w={24} h={24} stroke="#fff"><path d="M1 1h22v22H4l-3-3zM5.500 1v10.500h13V1M7 23v-7.500h10V23M10.500 18v5" /></Icon>
          <Icon w={22} h={24} stroke="#e6e6e6"><path d="M1 1v9h9M1.500 9.500C7 2 11 1 14 1c5 0 7.500 5 6 10-1 4-5 8-11 12" /></Icon>
          <Icon w={22} h={24} stroke="#777"><path d="M21 1v9h-9M20.500 9.500C15 2 11 1 8 1 3 1 .5 6 2 11c1 4 5 8 11 12" /></Icon>
        </QuickAccess>
        <DocTitle>
          <span>spotify dashboard • Last saved: Today at 12:01 AM</span>
          <svg width="13" height="9" viewBox="0 0 13 9"><path d="M0 0h13L6.500 7z" fill="#fff" /></svg>
        </DocTitle>
        <SearchBox>
          <Icon w={24} h={24}><circle cx="15.500" cy="8.500" r="7.800" /><path d="M10 14.500L.8 23.500" /></Icon>
          <span>Search</span>
        </SearchBox>
        <SignIn>
          <span>Sign in</span>
          <svg width="30" height="30" viewBox="0 0 30 30"><circle cx="15" cy="15" r="15" fill="#f0f0ee" /><g fill="none" stroke="#111" strokeWidth="1.900"><circle cx="15" cy="8" r="4" /><path d="M6.500 16h17c.5 6-4 9.500-8.500 9.500S6 22 6.500 16z" /></g></svg>
        </SignIn>
        <WindowButtons>
          <Icon w={16} h={16} stroke="#fff"><path d="M0 7.500h16" /></Icon>
          <Icon w={16} h={16} stroke="#fff"><rect x=".8" y="3.500" width="11.500" height="11.700" rx="2" /><path d="M4 1h7c3 0 4.200 1 4.200 4v7" /></Icon>
          <Icon w={16} h={16} stroke="#fff"><path d="M.5.5l15 15M15.500.5l-15 15" /></Icon>
        </WindowButtons>
      </TitleBar>

      <Ribbon>
        <TabRow>
          {tabs.map(([t, w, gap, ls]) => <Tab key={t} $w={w} $gap={gap} $ls={ls} $active={t === "View"}>{t}</Tab>)}
          <ShareButton>
            <Icon w={24} h={21} stroke="#fff"><path d="M1 5v15h17v-4M5 15c0-6 4-9.500 11-9.500V1.500l7 6.500-7 6.500v-4c-5 0-8 1-11 4.500z" /></Icon>
            <span>Share</span>
            <Icon w={15} h={9} stroke="#fff" sw={1.700}><path d="M.7.8l6.800 7 6.800-7" /></Icon>
          </ShareButton>
        </TabRow>
        <GroupRow>
          <Group $w={735}>
            <GroupBody>
              <Gallery>
                {themes.map((colors, i) => (
                  <ThemeCell key={i} $active={i === 3}>
                    <ThemeThumb $active={i === 3}>
                      <ThumbText>Aa</ThumbText>
                      <ThumbBars>{colors.map((c, j) => <ThumbBar key={j} $c={c} $h={barHeights[j]} />)}</ThumbBars>
                    </ThemeThumb>
                  </ThemeCell>
                ))}
                <GalleryMore><SmallCaret /></GalleryMore>
              </Gallery>
            </GroupBody>
            <GroupLabel>Themes</GroupLabel>
          </Group>
          <Group $w={95}>
            <GroupBody $center>
              <Command $w={90}>
                <CommandIcon>
                  <Icon w={42} h={42}><path d="M11 0v8M41.300 0v8M11 4h30M0 10.700h8M0 41.300h8M4 10.700v30.600" /><rect x="11" y="11" width="30.300" height="30.300" fill="#fff" /><rect x="15.500" y="15.500" width="21.500" height="4.500" fill={lightGray} stroke={gray} /></Icon>
                </CommandIcon>
                <CommandText>{"Page\nview"}<SmallCaret w={10} /></CommandText>
              </Command>
            </GroupBody>
            <GroupLabel>Scale to fit</GroupLabel>
          </Group>
          <Group $w={85}>
            <GroupBody $center>
              <Command $w={80}>
                <CommandIcon $pr={2}><Icon w={26} h={42}><rect x=".8" y=".8" width="24.400" height="40.400" rx="1" fill="#fff" /><path d="M9 37h8" /></Icon></CommandIcon>
                <CommandText>{"Mobile\nlayout"}</CommandText>
              </Command>
            </GroupBody>
            <GroupLabel>Mobile</GroupLabel>
          </Group>
          <Group $w={182}>
            <GroupBody>
              <CheckList>
                <CheckRow $ls={0.1}><CheckBox />Gridlines</CheckRow>
                <CheckRow $ls={0.35}><CheckBox />Snap to grid</CheckRow>
                <CheckRow $ls={0.15}><CheckBox />Lock objects</CheckRow>
              </CheckList>
            </GroupBody>
            <GroupLabel>Page options</GroupLabel>
          </Group>
          <Group $w={420}>
            <GroupBody $pl={12}>
              <Command $w={60} $active>
                <CommandIcon><Icon w={42} h={42}><path d="M.8.8h40.400v7.500L26 23.500v17.700H16V23.500L.8 8.300z" fill="#fff" /></Icon></CommandIcon>
                <CommandText>Filters</CommandText>
              </Command>
              <Command $w={94}>
                <CommandIcon $pr={2}><Icon w={26} h={42}><path d="M.8.8h24.400v40L13 34 .8 40.800z" fill="#fff" /></Icon></CommandIcon>
                <CommandText>Bookmarks</CommandText>
              </Command>
              <Command $w={75}>
                <CommandIcon $pl={2}>
                  <Icon w={44} h={45}><rect x="16" y=".8" width="26" height="28" fill="#f8da92" stroke="#e07a10" /><rect x="0" y="19" width="25" height="22.500" fill="#fff" stroke="#fafafa" strokeWidth="4" /><rect x=".8" y="19.500" width="25" height="21.500" fill="#fff" /><path d="M26 17v25l6-5 4 8 4-2-4-7h7z" fill="#fff" stroke="#fafafa" strokeWidth="4" /><path d="M26.500 17v25.500l5.500-5.500 3.500 7.500 4-2-3.500-7h7.500z" fill="#fff" /></Icon>
                </CommandIcon>
                <CommandText>Selection</CommandText>
              </Command>
              <Command $w={108}>
                <CommandIcon $pl={7}>
                  <Icon w={42} h={45}><path d="M20 41.200H.8V.8h32.700v20" fill="#fff" /><path d="M9 15.500h7V34H9zM16 8h8v26h-8z" stroke={gray} fill="#fff" /><circle cx="31" cy="34.500" r="12.500" fill="#fafafa" stroke="none" /><circle cx="31" cy="34.500" r="9.700" fill="#fff" stroke="#2b8fd0" strokeWidth="1.800" /><path d="M30 28.500v7h5M27 22.300h8M31 22v3M38 26l2.500-2.500" stroke="#2b8fd0" strokeWidth="1.800" /></Icon>
                </CommandIcon>
                <CommandText>{"Performance\nanalyzer"}</CommandText>
              </Command>
              <Command $w={57}>
                <CommandIcon>
                  <Icon w={48} h={45}><path d="M3 20v21h28M24 .8h20.700V22" fill="none" /><path d="M25 1.500h19v5H25z" fill={lightGray} /><path d="M24 12h15v7H18M27 26H9v8h18" stroke={gray} /><path d="M1.500 10C2 3 7-1.500 12-1.500S20 2 21.500 5M22 8.500C21 15 17 18.500 12 18.500S4 15 2 12" stroke="#3f9b52" strokeWidth="2" /><path d="M22.500-2.500v8H15M.8 18.500V11H8" stroke="#3f9b52" strokeWidth="2" /><path d="M25 22.500h22v4l-8 9v9h-6v-9l-8-9z" fill="#fff" /></Icon>
                </CommandIcon>
                <CommandText>{"Sync\nslicers"}</CommandText>
              </Command>
            </GroupBody>
            <GroupLabel>Show panes</GroupLabel>
          </Group>
          <Collapse><SmallCaret up w={14} /></Collapse>
        </GroupRow>
      </Ribbon>

      <Work>
        <Nav>
          <NavItem $active><Icon w={21} h={22} stroke="#000"><path d="M.8 0v20.800H21M4.500 5h2.500v13H4.500zM10 8.500h2.500V18H10zM16 1.500h3V18h-3z" /></Icon></NavItem>
          <NavItem $h={57}><Icon w={24} h={24} stroke={gray}><path d="M.8.8h22.400v22.400H.8zM.8 4.500h22.400M.8 11h22.400M.8 17.200h22.400M8.500 4.500v18.700M15.700 4.500v18.700" /></Icon></NavItem>
          <NavItem $h={64}><Icon w={28} h={28} stroke={gray}><path d="M15.500.8h11.700v11.400H15.500zM15.500 4.500h11.700M.8 8.500h11.400v11.300H.8zM.8 12.500h11.400M15.500 16h11.700v11.200H15.500zM15.500 20h11.700M7 8.500V3.500h8.500M7 19.800v4h8.500" /></Icon></NavItem>
          <NavItem $h={56}>
            <Icon w={31} h={24} stroke={gray}><path d="M7 16V1h10l5.500 6v10.500c0 3-1 5-2 6M16.500 1v7h6M25.500 9.500V18c0 3-1 5-3 6" /><text x="0" y="24" fontSize="9.800" fontWeight="700" fill={gray} stroke="none" fontFamily="Open Sans">DAX</text></Icon>
          </NavItem>
        </Nav>
        <CenterColumn>
          <CanvasRow>
            <CanvasArea>
              <Page>
                <Visual>
                  <VisualTitle><span>Count of track_name and First track_name by artist_name</span></VisualTitle>
                  <Chart />
                </Visual>
              </Page>
              <ScrollThumb $w={12} $h={308} />
              <span />
              <ScrollThumb $w={859} $h={12} />
            </CanvasArea>
            <FiltersPane>
              <Chevrons />
              <FilterGlyph><Icon w={18} h={19} stroke="#252423"><path d="M16.800.8v17.400h-2L9.500 12H.8V7h8.700l5.300-6.200z" /></Icon></FilterGlyph>
              <VerticalLabel $size={21.8} $mt={12} $mr={2}>Filters</VerticalLabel>
            </FiltersPane>
          </CanvasRow>
          <PageBar>
            <ViewModes>
              <ViewMode $active $gap={31} $pt={4}>
                <Icon w={29} h={21} stroke="#605e5c" sw={2}><path d="M1 1h27v15H1zM14.500 16v4M9.500 20h10" /></Icon>
              </ViewMode>
              <ViewMode>
                <Icon w={20} h={31} stroke="#605e5c" sw={2}><rect x="1" y="1" width="18" height="28.500" rx="1.500" /><path d="M8 25h4" /></Icon>
              </ViewMode>
              <PageArrows>
                <svg width="7" height="12" viewBox="0 0 7 12"><path d="M7 0v12L0 6z" fill="#c8c6c4" /></svg>
                <svg width="7" height="12" viewBox="0 0 7 12"><path d="M0 0v12l7-6z" fill="#c8c6c4" /></svg>
              </PageArrows>
            </ViewModes>
            <PageTab>Page 1</PageTab>
            <AddPage><Icon w={17} h={17} stroke="#fff" sw={4.500}><path d="M8.500 0v17M0 8.500h17" /></Icon></AddPage>
          </PageBar>
        </CenterColumn>
        <VizPane>
          <PaneHeader><span>Visualizations</span><Chevrons flip /></PaneHeader>
          <BuildLabel>Build visual</BuildLabel>
          <ModeRow>
            <ModeButton $active>
              <Icon w={36} h={36} stroke="#252423" sw={2}><path d="M0 1h29" /><path d="M1 8.500h34v10.500H1zM1 25h34v10.500H1z" fill={green} strokeDasharray="2.600 1.600" /></Icon>
            </ModeButton>
            <ModeButton>
              <Icon w={36} h={36} stroke="#252423"><path d="M6 35H.8V.8H16l10.500 11V14M16 .8v11h10.500" /><path d="M35 13.500c-3 0-13 10-14.500 14l3 3C28 27 35 18 35 13.500zM20.500 27.500c-5 0-6 6-11.500 6.500 3 1.500 10 2 12.500 0 2-1.500 2-2 2-3.500z" /></Icon>
            </ModeButton>
          </ModeRow>
          <DividerWrap><Icon w={270} h={14} stroke="#8a8886"><path d="M0 12.500h24.500L36 .8l11.500 11.700H270" /></Icon></DividerWrap>
          <VizGrid>{vizIcons.map((ic, i) => <Icon key={i} w={28} h={28}>{ic}</Icon>)}</VizGrid>
          <More><i /><i /><i /></More>
          <FieldsArea>
            <Fields>
              <FieldLabel $h={42} $pt={10}>Values</FieldLabel>
              <DropWell>Add data fields here</DropWell>
              <FieldLabel $h={45} $pt={16} $bold>Drill through</FieldLabel>
              <ToggleRow><span>Cross-report</span><Toggle><i />Off</Toggle></ToggleRow>
              <ToggleRow><span>Keep all filters</span><Toggle $on><i />On</Toggle></ToggleRow>
            </Fields>
            <ScrollThumb $w={9} $h={171} />
          </FieldsArea>
        </VizPane>
        <DataPane>
          <Chevrons />
          <VerticalLabel $size={21.8} $mt={21} $mr={4}>Data</VerticalLabel>
        </DataPane>
      </Work>

      <StatusBar>
        <PageCount>Page 1 of 1</PageCount>
        <Zoom>
          <Icon w={205} h={18} stroke="#605e5c" sw={2}><path d="M0 9.500h7M173 8h11M178.500 2.500v11" /><path d="M14 8.500h150" strokeWidth="1.200" /><path d="M89 5v7" /><path d="M97 0v17" strokeWidth="6" /></Icon>
          <span>130%</span>
          <Icon w={24} h={18} stroke="#605e5c"><path d="M.8.8h22.400v16.400H.8z" /><path d="M4 7V4h3.500M16.500 4H20v3M4 11v3h3.500M16.500 14H20v-3" /></Icon>
        </Zoom>
      </StatusBar>

      <Taskbar>
        <Weather>
          <svg width="42" height="46" viewBox="0 0 42 46"><path d="M15 15v25c0 3-5 3-5 0v-2" fill="none" stroke="#8d8f92" strokeWidth="2.500" /><path d="M1 32C2 22 8 18 15 18s14 4 15 14c-2-2-4-2-6 0-2-2-5-2-7 0-2-2-4-2-6 0-2-2-3-2-5 0-1-2-3-2-5 0z" fill="#5fb0f2" /><path d="M11 31c0-8 2-12 4-13 3 1 5 5 5 13z" fill="#a9d6fa" /><circle cx="28.500" cy="14" r="12" fill="#c42b1c" /><text x="28.500" y="19.500" textAnchor="middle" fontSize="15.500" fill="#fff" fontFamily="Open Sans">5</text></svg>
        </Weather>
        {apps.map((a, i) => <AppSlot key={i} $first={i === 0}>{a}</AppSlot>)}
        <Divider $ml={-10} />
        <ActiveApp>
          <svg width="36" height="36" viewBox="0 0 36 36"><rect width="36" height="36" fill="#2b8494" /><path d="M19 0h12v36H19z" fill="#e2960e" /><path d="M25 0h6v36h-6z" fill="#c9820c" opacity=".6" /><path d="M12 9h12v27H12z" fill="#f0be1e" /><path d="M4 18h12v18H4z" fill="#f7da5a" /></svg>
          <i />
        </ActiveApp>
        <TrayDots><i /><i /><i /></TrayDots>
        <Divider $ml={24} />
        <Tray>
          <TrayItem $w={43} $pt={28}><Icon w={16} h={10} stroke="#fff" sw={2}><path d="M1 9l7-7.500L15 9" /></Icon></TrayItem>
          <TrayItem $w={42} $pt={26}>
            <svg width="26" height="21" viewBox="0 0 26 21"><path d="M6 15c-7 0-7-8-1-9C7-1 17-1 19 5c5 1 5 8 1 10z" fill="#8a8a8a" stroke="#111" strokeWidth="1.500" /><circle cx="18" cy="13.500" r="6.500" fill="#fff" /><path d="M14 12.500a4 4 0 0 1 7.500-.5M22 14.500a4 4 0 0 1-7.500.5" fill="none" stroke="#1068c5" strokeWidth="1.700" /></svg>
          </TrayItem>
          <TrayText $w={56} $mr={17} $size={17} $align="center">ENG<br />IN</TrayText>
          <TrayItem $w={36} $pt={24}><Icon w={24} h={18} stroke="#fff" sw={1.700}><path d="M.8 6.500c6-7 16.400-7 22.400 0M4.500 10.500c4-5 11-5 15 0M8 14c2-3 6-3 8 0" /><circle cx="12" cy="16" r="1.500" fill="#fff" /></Icon></TrayItem>
          <TrayItem $w={36} $pt={24}><Icon w={24} h={20} stroke="#fff" sw={1.600}><path d="M.8 7h4.500L10.500 2v16L5.300 13H.8zM13.500 6.500c2 2 2 5 0 7M16.500 4c3.500 3.500 3.500 8.500 0 12M19.500 1.500c5 5 5 12 0 17" /></Icon></TrayItem>
          <TrayItem $w={49} $pt={22}><Icon w={25} h={20} stroke="#fff" sw={1.600}><path d="M9 4.500h11.500c1 0 1.500.5 1.500 1.500v11c0 1-.5 1.500-1.500 1.500H4c-1 0-1.500-.5-1.500-1.500v-5" /><path d="M10 7h9.500v9.500H6V12z" fill="#fff" stroke="none" /><path d="M23.500 9h1v5h-1z" fill="#fff" /><path d="M5-1l-4 8h3l-1 5 6-7.500H6L8-1z" fill="#fff" stroke="none" /></Icon></TrayItem>
          <TrayText $w={94} $size={17.7} $align="right">00:06<br />10-07-2025</TrayText>
        </Tray>
      </Taskbar>
    </Window>
  );
}
